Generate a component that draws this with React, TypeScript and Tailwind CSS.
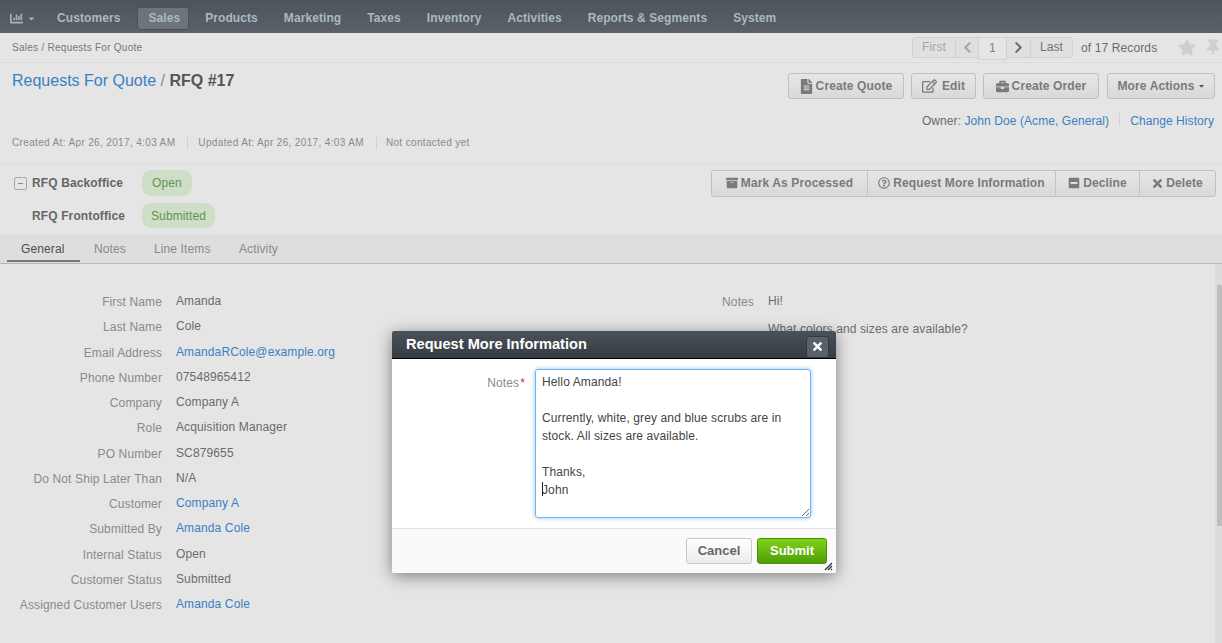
import React from 'react';
import {
  FaChartBar,
  FaCaretDown,
  FaChevronLeft,
  FaChevronRight,
  FaStar,
  FaThumbtack,
  FaFileAlt,
  FaRegEdit,
  FaBriefcase,
  FaArchive,
  FaRegQuestionCircle,
  FaMinusSquare,
  FaTimes,
} from 'react-icons/fa';

const navItems = ['Customers', 'Sales', 'Products', 'Marketing', 'Taxes', 'Inventory', 'Activities', 'Reports & Segments', 'System'];

const leftFields = [
  { label: 'First Name', value: 'Amanda' },
  { label: 'Last Name', value: 'Cole' },
  { label: 'Email Address', value: 'AmandaRCole@example.org', link: true },
  { label: 'Phone Number', value: '07548965412' },
  { label: 'Company', value: 'Company A' },
  { label: 'Role', value: 'Acquisition Manager' },
  { label: 'PO Number', value: 'SC879655' },
  { label: 'Do Not Ship Later Than', value: 'N/A' },
  { label: 'Customer', value: 'Company A', link: true },
  { label: 'Submitted By', value: 'Amanda Cole', link: true },
  { label: 'Internal Status', value: 'Open' },
  { label: 'Customer Status', value: 'Submitted' },
  { label: 'Assigned Customer Users', value: 'Amanda Cole', link: true },
];

const noteText = `Hello Amanda!

Currently, white, grey and blue scrubs are in stock. All sizes are available.

Thanks,
John`;

const ActionButton = ({ icon, label, width }: { icon?: React.ReactNode; label: React.ReactNode; width: string }) => (
  <button className={`${width} h-[26px] flex items-center justify-center gap-[3px] rounded-[3px] border border-[#c0c0c0] bg-gradient-to-b from-[#e6e6e6] to-[#d9d9d9] text-[12px] font-bold text-[#7a7a7a]`}>
    {icon}
    {label}
  </button>
);

const GroupButton = ({ icon, label, width }: { icon: React.ReactNode; label: string; width: string }) => (
  <button className={`${width} h-full pb-[1px] flex items-center justify-center gap-[3px] border-l border-[#c4c4c4] first:border-l-0 bg-gradient-to-b from-[#e6e6e6] to-[#d9d9d9] text-[12px] font-bold text-[#7a7a7a]`}>
    {icon}
    {label}
  </button>
);

const App = () => {
  return (
    <div className="relative h-[643px] w-[1222px] overflow-hidden bg-[#e5e5e5] font-['Liberation_Sans',Arial,sans-serif] text-[12px] tracking-[0.12px] text-[#6b6b6b]">
      {/* top nav */}
      <div className="h-[33px] bg-gradient-to-b from-[#4d545c] to-[#5a6169] flex items-center pl-[9px] pt-[3px] tracking-[0.08px]">
        <div className="flex items-center gap-[4px] w-[37px] text-[#a6b6bd]">
          <FaChartBar className="w-[15px] h-[13px]" />
          <FaCaretDown className="w-[7px] h-[9px]" />
        </div>
        <div className="flex items-center gap-[4px]">
          {navItems.map((item) => (
            <div
              key={item}
              className={
                item === 'Sales'
                  ? 'ml-[2px] mr-[1px] h-[23px] pl-[10px] pr-[8px] flex items-center rounded-[3px] border border-[#4b5158] bg-[#6d747c] text-[12px] font-bold text-[#a9b9c0]'
                  : 'h-[23px] px-[11px] flex items-center text-[12px] font-bold text-[#a9b9c0]'
              }
            >
              {item}
            </div>
          ))}
        </div>
      </div>

      {/* breadcrumbs + pager */}
      <div className="h-[30px] flex items-center justify-between border-b border-[#dcdcdc] pl-[12px] pr-[3px]">
        <div className="text-[10px] tracking-[0.27px] text-[#777777]">Sales / Requests For Quote</div>
        <div className="flex items-center">
          <div className="flex h-[22px] items-start text-[12px]">
            <div className="flex h-[21px] rounded-[3px] border border-[#d2d2d2] bg-[#e0e0e0]">
              <div className="w-[42px] flex items-center justify-center text-[#a5a5a5]">First</div>
              <div className="w-[23px] flex items-center justify-center border-l border-[#d2d2d2] text-[#a5a5a5]">
                <FaChevronLeft className="w-[11px] h-[13px]" />
              </div>
              <div className="w-[29px] h-[22px] flex items-center justify-center border border-t-0 border-[#d2d2d2] bg-[#e5e5e5] text-[#808080]">1</div>
              <div className="w-[23px] flex items-center justify-center text-[#6b6b6b]">
                <FaChevronRight className="w-[11px] h-[13px]" />
              </div>
              <div className="w-[42px] flex items-center justify-center border-l border-[#d2d2d2] text-[#707070]">Last</div>
            </div>
          </div>
          <div className="ml-[8px] w-[97px] text-[12px] text-[#6b6b6b]">of 17 Records</div>
          <FaStar className="w-[18px] h-[17px] text-[#cfcfcf]" />
          <FaThumbtack className="ml-[11px] w-[12px] h-[17px] text-[#cfcfcf]" />
        </div>
      </div>

      {/* title block */}
      <div className="h-[101px] border-b border-[#dcdcdc] flex flex-col">
        <div className="flex justify-between pl-[12px] pr-[7px] pt-[10px]">
          <div className="text-[16px] tracking-normal leading-[16px]">
            <a className="text-[#3a7fc4]">Requests For Quote</a>
            <span className="text-[#8a8a8a]"> / </span>
            <span className="font-bold text-[#555555]">RFQ #17</span>
          </div>
          <div className="flex gap-[7px]">
            <ActionButton width="w-[116px]" icon={<FaFileAlt className="w-[13px] h-[15px]" />} label="Create Quote" />
            <ActionButton width="w-[65px]" icon={<FaRegEdit className="w-[15px] h-[14px]" />} label={<span className="ml-[2px]">Edit</span>} />
            <ActionButton width="w-[116px]" icon={<FaBriefcase className="w-[13px] h-[13px]" />} label="Create Order" />
            <ActionButton
              width="w-[108px] ml-[1px]"
              label={
                <span className="flex items-center gap-[3px]">
                  More Actions
                  <FaCaretDown className="w-[7px] h-[8px] text-[#555555]" />
                </span>
              }
            />
          </div>
        </div>
        <div className="mt-[13px] flex justify-end pr-[8px] text-[12px] tracking-[0.08px]">
          <span className="text-[#6b6b6b]">Owner:&nbsp;</span>
          <a className="text-[#3a7fc4]">John Doe (Acme, General)</a>
          <span className="mx-[10px] w-px h-[14px] bg-[#d2d2d2]" />
          <a className="text-[#3a7fc4]">Change History</a>
        </div>
        <div className="mt-[5px] flex items-center pl-[12px] text-[10px] tracking-[0.35px] text-[#8a8a8a]">
          <span>Created At: Apr 26, 2017, 4:03 AM</span>
          <span className="ml-[12px] mr-[10px] w-px h-[14px] bg-[#d2d2d2]" />
          <span>Updated At: Apr 26, 2017, 4:03 AM</span>
          <span className="ml-[12px] mr-[9px] w-px h-[14px] bg-[#d2d2d2]" />
          <span>Not contacted yet</span>
        </div>
      </div>

      {/* statuses + workflow buttons */}
      <div className="h-[71px] flex justify-between pl-[14px] pr-[6px] pt-[6px]">
        <div className="flex flex-col gap-[7px]">
          <div className="flex items-center h-[26px]">
            <div className="w-[13px] h-[13px] flex items-center justify-center rounded-[2px] border border-[#a8a8a8] text-[#8a8a8a] leading-none">
              <span className="block w-[5px] h-px bg-[#8a8a8a]" />
            </div>
            <span className="ml-[5px] w-[110px] font-bold text-[#666666]">RFQ Backoffice</span>
            <span className="h-[26px] px-[10px] flex items-center rounded-[9px] bg-[#cfdec7] text-[#66944f]">Open</span>
          </div>
          <div className="flex items-center h-[25px]">
            <span className="ml-[18px] w-[110px] font-bold text-[#666666]">RFQ Frontoffice</span>
            <span className="h-[25px] px-[9px] flex items-center rounded-[9px] bg-[#cfdec7] text-[#66944f]">Submitted</span>
          </div>
        </div>
        <div className="flex h-[27px] overflow-hidden rounded-[3px] border border-[#c0c0c0]">
          <GroupButton width="w-[155px]" icon={<FaArchive className="w-[12px] h-[12px]" />} label="Mark As Processed" />
          <GroupButton width="w-[188px]" icon={<FaRegQuestionCircle className="w-[12px] h-[12px]" />} label="Request More Information" />
          <GroupButton width="w-[84px]" icon={<FaMinusSquare className="w-[12px] h-[12px]" />} label="Decline" />
          <GroupButton width="w-[76px]" icon={<FaTimes className="w-[11px] h-[13px]" />} label="Delete" />
        </div>
      </div>

      {/* tabs */}
      <div className="h-[29px] flex items-stretch bg-[#dedede] border-b border-[#b8b8b8] pl-[7px]">
        <div className="w-[73px] pl-[14px] pt-[2px] flex items-center border-b-2 border-[#777777] mb-[1px] text-[#4f4f4f]">General</div>
        <div className="w-[60px] pl-[14px] flex items-center text-[#8a8a8a]">Notes</div>
        <div className="w-[85px] pl-[14px] flex items-center text-[#8a8a8a]">Line Items</div>
        <div className="pl-[14px] flex items-center text-[#8a8a8a]">Activity</div>
      </div>

      {/* content with scrollbar */}
      <div className="h-[379px] flex">
        <div className="flex-1 flex pt-[24.5px]">
          <div className="w-[700px]">
            {leftFields.map((field) => (
              <div key={field.label} className="h-[25.25px] flex items-center">
                <div className="w-[162px] pt-[2px] text-right text-[#8a8a8a]">{field.label}</div>
                <div className={`ml-[14px] ${field.link ? 'text-[#3a7fc4]' : 'text-[#6b6b6b]'}`}>{field.value}</div>
              </div>
            ))}
          </div>
          <div className="flex">
            <div className="w-[54px] h-[25px] pt-[2px] flex items-center justify-end text-[#8a8a8a]">Notes</div>
            <div className="ml-[14px] text-[#6b6b6b]">
              <div className="h-[25px] flex items-center">Hi!</div>
              <div className="mt-[3px] h-[25px] flex items-center">What colors and sizes are available?</div>
            </div>
          </div>
        </div>
        <div className="w-[7px] bg-[#dcdcdc] pt-[21px] pl-[2px]">
          <div className="h-[241px] bg-[#bdbdbd]" />
        </div>
      </div>

      {/* dialog */}
      <div className="absolute left-[392px] top-[331px] w-[444px] h-[242px] flex flex-col rounded-[2px] bg-white shadow-[0_3px_16px_rgba(0,0,0,0.45)]">
        <div className="h-[28px] flex items-center justify-between rounded-t-[2px] border-b border-black bg-gradient-to-b from-[#4a515a] to-[#363c43] pl-[14px] pr-[7px]">
          <span className="text-[14.6px] tracking-normal font-bold text-white">Request More Information</span>
          <div className="mt-[4px] w-[23px] h-[22px] flex items-center justify-center rounded-[3px] border border-[#353a40] bg-[#5a6169] text-white">
            <FaTimes className="w-[11px] h-[13px]" />
          </div>
        </div>
        <div className="h-[170px] flex pt-[10px] border-b border-[#e2e2e2]">
          <div className="w-[133px] text-right pt-[5px] text-[#8a8a8a]">
            Notes<span className="ml-[1px] text-[#c0392b]">*</span>
          </div>
          <div className="relative ml-[10px]">
            <textarea
              readOnly
              defaultValue={noteText}
              className="block w-[276px] h-[149px] rounded-[3px] border border-[#72b3ec] px-[6px] py-[3px] text-[12px] leading-[18px] text-[#444444] outline-none shadow-[0_0_4px_rgba(114,179,236,0.8)]"
            />
            <span className="absolute left-[7px] top-[113px] w-px h-[14px] bg-[#222222]" />
          </div>
        </div>
        <div className="relative flex-1 flex items-center justify-end gap-[5px] bg-[#fafafa] pr-[9px] rounded-b-[2px]">
          <button className="w-[66px] h-[26px] rounded-[3px] border border-[#c8c8c8] bg-gradient-to-b from-white to-[#ececec] text-[13px] tracking-normal font-bold text-[#666666]">Cancel</button>
          <button className="w-[70px] h-[26px] rounded-[3px] border border-[#4b8f06] bg-gradient-to-b from-[#80d218] to-[#4f9e05] text-[13px] tracking-normal font-bold text-white">Submit</button>
          <svg className="absolute right-[3px] bottom-[2px]" width="9" height="9" viewBox="0 0 9 9">
            <path d="M1 8 L8 1 M4 8 L8 4 M7 8 L8 7" stroke="#333333" strokeWidth="1.3" fill="none" />
          </svg>
        </div>
      </div>
    </div>
  );
};

export default App;
